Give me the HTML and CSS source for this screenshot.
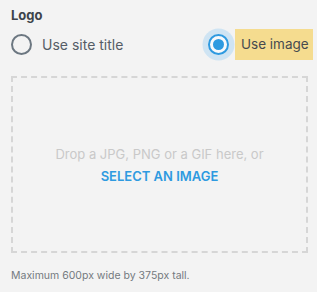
FILE: index.html
```html
<!DOCTYPE html>
<html>
<head>
<meta charset="utf-8">
<link rel="stylesheet" href="styles.css">
</head>
<body>
<div class="panel">
  <h3 class="title">Logo</h3>
  <div class="options">
    <label class="option">
      <span class="radio"></span>
      <span class="label">Use site title</span>
    </label>
    <label class="option option-selected">
      <span class="radio radio-checked"><span class="dot"></span></span>
      <span class="label label-highlight">Use image</span>
    </label>
  </div>
  <div class="dropzone">
    <p class="drop-text">Drop a JPG, PNG or a GIF here, or</p>
    <a class="select-link">SELECT AN IMAGE</a>
  </div>
  <p class="hint">Maximum 600px wide by 375px tall.</p>
</div>
</body>
</html>
```

FILE: styles.css
```css
html, body {
  margin: 0;
  padding: 0;
  background: #f3f3f3;
  font-family: Inter, "Noto Sans", sans-serif;
}

.panel {
  padding: 7px 9px 0 11px;
}

.title {
  margin: 0;
  font-size: 13px;
  line-height: 16px;
  font-weight: 700;
  color: #3d434a;
}

.options {
  display: flex;
  justify-content: space-between;
  align-items: center;
  height: 32px;
  margin-top: 5px;
  margin-right: -5px;
}

.option {
  display: flex;
  align-items: center;
}

.radio {
  box-sizing: border-box;
  width: 21px;
  height: 21px;
  border: 2px solid #6c7781;
  border-radius: 50%;
  display: flex;
  align-items: center;
  justify-content: center;
}

.radio-checked {
  border-color: #2e9ae0;
  background: #f7f9fb;
  box-shadow: 0 0 0 5.5px #cfe4f3;
  margin-right: 6px;
}

.dot {
  width: 11px;
  height: 11px;
  border-radius: 50%;
  background: #2e9ae0;
}

.label {
  font-size: 14px;
  line-height: 17px;
  color: #555d66;
  margin-left: 10px;
  white-space: nowrap;
}

.label-highlight {
  box-sizing: border-box;
  margin-left: 0;
  background: #f5dc8f;
  padding: 7px 0 7px 6px;
  width: 78px;
  font-size: 13.5px;
  color: #464a4f;
}

.dropzone {
  box-sizing: border-box;
  margin-top: 16px;
  height: 177px;
  border: 2px dashed #d6d6d6;
  display: flex;
  flex-direction: column;
  align-items: center;
  justify-content: center;
}

.drop-text {
  margin: 0;
  font-size: 13px;
  line-height: 16px;
  color: #c9c9c9;
}

.select-link {
  margin-top: 6px;
  font-size: 13px;
  line-height: 16px;
  font-weight: 600;
  color: #2e9ae0;
}

.hint {
  margin: 16px 0 0;
  font-size: 10.5px;
  line-height: 14px;
  color: #737a80;
}
```
